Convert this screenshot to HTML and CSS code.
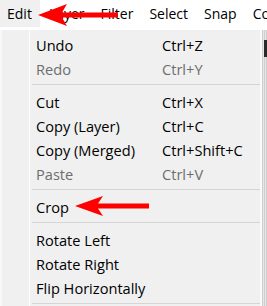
FILE: index.html
```html
<!DOCTYPE html>
<html lang="en">
<head>
  <meta charset="UTF-8" />
  <title>Edit menu</title>
  <link rel="stylesheet" href="styles.css">
</head>
<body>
  <div class="menubar">
    <span class="top open">Edit</span>
    <span class="top">Layer</span>
    <span class="top">Filter</span>
    <span class="top">Select</span>
    <span class="top">Snap</span>
    <span class="top last">Co</span>
  </div>

  <div class="stage">
    <div class="menu">
      <div class="item"><span>Undo</span><span>Ctrl+Z</span></div>
      <div class="item off"><span>Redo</span><span>Ctrl+Y</span></div>
      <div class="sep"></div>
      <div class="item"><span>Cut</span><span>Ctrl+X</span></div>
      <div class="item"><span>Copy (Layer)</span><span>Ctrl+C</span></div>
      <div class="item"><span>Copy (Merged)</span><span>Ctrl+Shift+C</span></div>
      <div class="item off"><span>Paste</span><span>Ctrl+V</span></div>
      <div class="sep"></div>
      <div class="item"><span>Crop</span><span></span></div>
      <div class="sep"></div>
      <div class="item"><span>Rotate Left</span><span></span></div>
      <div class="item"><span>Rotate Right</span><span></span></div>
      <div class="item"><span>Flip Horizontally</span><span></span></div>
      <div class="sep"></div>
    </div>
    <div class="behind">
      <div class="knob"></div>
    </div>
  </div>

  <!-- annotation arrows drawn over the screenshot -->
  <svg class="arrow arrow-top" width="80" height="24" viewBox="0 0 80 24">
    <path d="M0 12 L29 1 L24 9.5 L80 9.5 L80 14.5 L24 14.5 L29 23 Z" fill="#ff0000"/>
  </svg>
  <svg class="arrow arrow-crop" width="74" height="22" viewBox="0 0 74 22">
    <path d="M0 11 L28 1 L23 8.5 L74 8.5 L74 13.5 L23 13.5 L28 21 Z" fill="#ff0000"/>
  </svg>
</body>
</html>
```

FILE: styles.css
```css
body {
  margin: 0;
  background: #fff;
  font-family: 'Open Sans', 'Noto Sans', sans-serif;
  font-size: 14px;
  color: #000;
  width: 267px;
  height: 306px;
  overflow: hidden;
  position: relative;
}
.menubar {
  display: flex;
  height: 30px;
  align-items: flex-start;
  white-space: nowrap;
}
.top {
  height: 27px;
  line-height: 27px;
  padding: 0 7px 0 7px;
  margin-right: 2px;
}
.top.open {
  background: #f0f0f0;
  padding-right: 8px;
}
.top.last {
  padding-right: 0;
}
.stage {
  display: flex;
  height: 276px;
}
.menu {
  width: 258px;
  padding-top: 3px;
  border-left: 2px solid #f8f8f8;
  background: linear-gradient(to right, #f0f0f0 27px, #fdfdfd 27px, #fdfdfd 28px, #f0f0f0 28px);
}
.item {
  display: grid;
  grid-template-columns: 126px auto;
  height: 24px;
  line-height: 24px;
  padding-left: 34px;
  font-size: 14.6px;
  white-space: nowrap;
}
.item.off {
  color: #6d6d6d;
}
.sep {
  height: 1px;
  background: #d5d5d5;
  margin: 3px 0 5px 30px;
}
.behind {
  flex: 1;
  border-left: 2px solid #fafafa;
  background: repeating-linear-gradient(to right, #cfcfcf 0, #cfcfcf 1px, #e6e6e6 1px, #e6e6e6 2px);
  padding-top: 10px;
}
.knob {
  height: 17px;
  margin-left: 2px;
  background: #2b2b2b;
}
.arrow {
  position: absolute;
}
.arrow-top {
  left: 38px;
  top: 3px;
}
.arrow-crop {
  left: 75px;
  top: 195px;
}
```
